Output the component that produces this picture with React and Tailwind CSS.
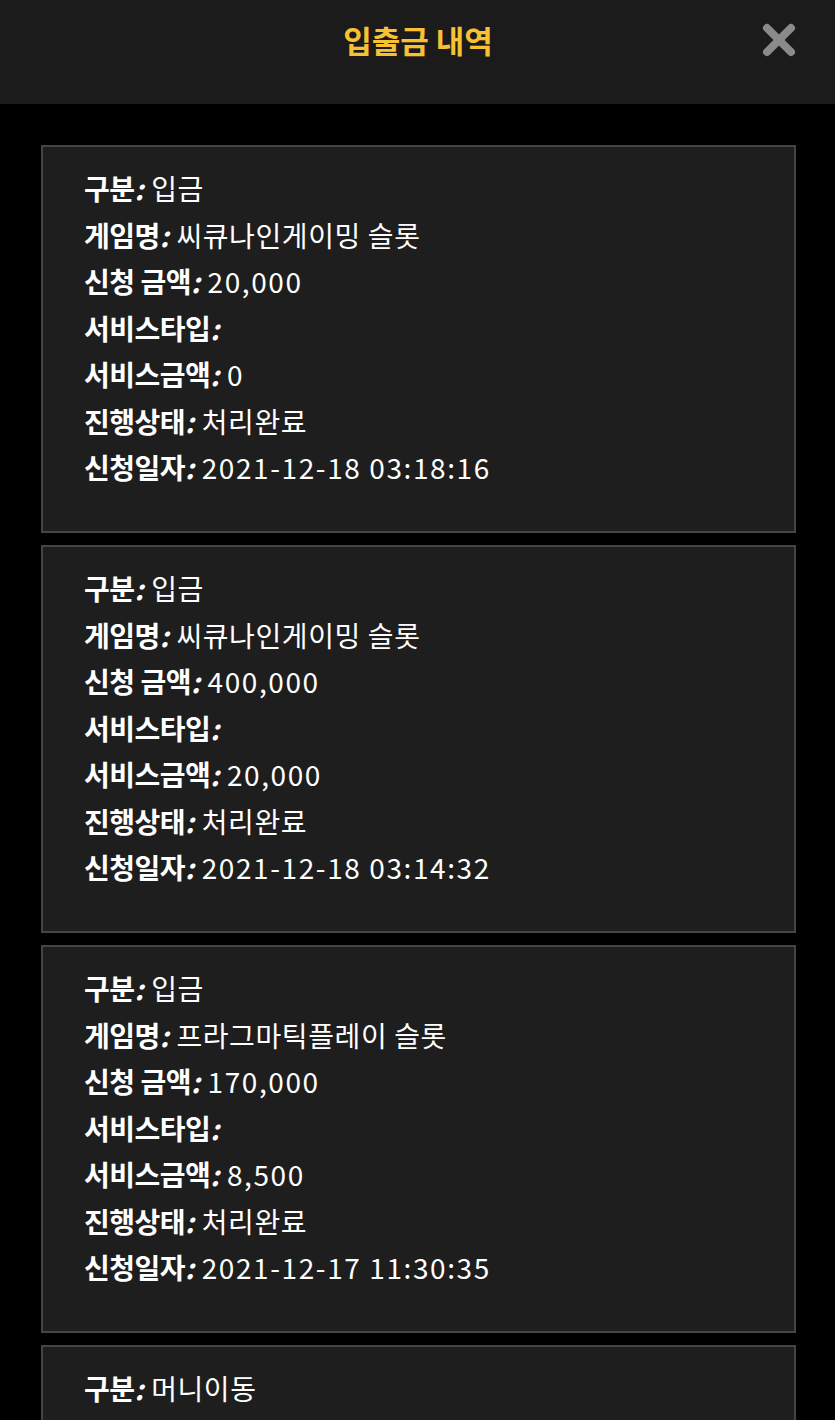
import React from "react";

const records = [
  [
    ["구분", "입금"],
    ["게임명", "씨큐나인게이밍 슬롯"],
    ["신청 금액", "20,000"],
    ["서비스타입", ""],
    ["서비스금액", "0"],
    ["진행상태", "처리완료"],
    ["신청일자", "2021-12-18 03:18:16"],
  ],
  [
    ["구분", "입금"],
    ["게임명", "씨큐나인게이밍 슬롯"],
    ["신청 금액", "400,000"],
    ["서비스타입", ""],
    ["서비스금액", "20,000"],
    ["진행상태", "처리완료"],
    ["신청일자", "2021-12-18 03:14:32"],
  ],
  [
    ["구분", "입금"],
    ["게임명", "프라그마틱플레이 슬롯"],
    ["신청 금액", "170,000"],
    ["서비스타입", ""],
    ["서비스금액", "8,500"],
    ["진행상태", "처리완료"],
    ["신청일자", "2021-12-17 11:30:35"],
  ],
  [
    ["구분", "머니이동"],
    ["게임명", ""],
  ],
];

function isNumeric(v) {
  return /^[0-9,:\- ]+$/.test(v);
}

export default function App() {
  return (
    <div
      className="w-[835px] h-[1420px] overflow-hidden bg-black"
      style={{ fontFamily: '"Noto Sans CJK KR", "Noto Sans", sans-serif' }}
    >
      <header className="relative h-[104px] bg-[#1b1b1b] flex items-center justify-center">
        <h1 className="text-[31px] font-bold text-[#f6c232] leading-none -mt-[25px] ml-[1px]">
          입출금 내역
        </h1>
        <button className="absolute right-[38px] top-[22px] w-[36px] h-[36px] flex items-center justify-center">
          <svg width="36" height="36" viewBox="0 0 36 36">
            <path
              d="M6 6 L30 30 M30 6 L6 30"
              stroke="#8a8a8a"
              strokeWidth="8"
              strokeLinecap="round"
            />
          </svg>
        </button>
      </header>
      <main className="flex flex-col gap-[12px] pt-[41px] pl-[41px] pr-[39px]">
        {records.map((rec, i) => (
          <section
            key={i}
            className="h-[388px] shrink-0 bg-[#1e1e1e] border-2 border-[#444444] pl-[41px] pt-[18px] text-white"
          >
            {rec.map(([label, value], j) => (
              <div key={j} className="h-[46.5px] flex items-center text-[28px] leading-none tracking-[-0.5px]">
                <span className="font-bold">{label}</span>
                <span className="italic font-bold mr-[8px]">:</span>
                <span
                  className={
                    isNumeric(value)
                      ? "font-normal tracking-[1.6px]"
                      : "font-normal tracking-[0.6px]"
                  }
                >
                  {value}
                </span>
              </div>
            ))}
          </section>
        ))}
      </main>
    </div>
  );
}
